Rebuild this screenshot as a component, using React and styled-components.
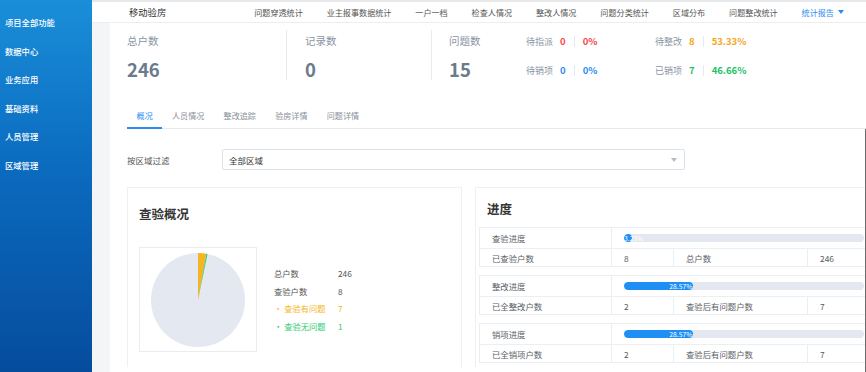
import React from "react";
import styled, { createGlobalStyle } from "styled-components";

const Global = createGlobalStyle`
  html, body { margin: 0; padding: 0; }
  body {
    font-family: "Noto Sans CJK SC", "Noto Sans", sans-serif;
    width: 866px; height: 372px; overflow: hidden; background: #fff;
  }
  * { box-sizing: border-box; }
`;

const Shell = styled.div`
  display: flex;
  width: 866px;
  height: 372px;
  overflow: hidden;
`;

const Sidebar = styled.nav`
  flex: 0 0 92px;
  background: linear-gradient(180deg, #1a8ed9 0%, #0b6bbf 45%, #064c9d 100%);
  padding-top: 8px;
  display: flex;
  flex-direction: column;
`;

const SideItem = styled.div`
  height: 28.6px;
  line-height: 28.6px;
  padding-left: 5px;
  color: #fff;
  font-size: 8.3px;
  font-weight: 500;
  white-space: nowrap;
`;

const Main = styled.div`
  flex: 1;
  display: flex;
  flex-direction: column;
  min-width: 0;
  background: #f4f5f7;
`;

const Header = styled.header`
  height: 23px;
  flex: 0 0 23px;
  background: #fff;
  border-top: 2px solid #e6e8eb;
  border-bottom: 1px solid #eceef1;
  display: flex;
  align-items: center;
  padding-left: 37px;
  white-space: nowrap;
`;

const Brand = styled.div`
  font-size: 9.3px;
  color: #333;
`;

const Nav = styled.div`
  display: flex;
  align-items: center;
  gap: 23.9px;
  margin-left: 88px;
`;

const NavItem = styled.div`
  font-size: 8.1px;
  color: ${(p) => (p.$active ? "#2d8cf0" : "#555")};
  display: flex;
  align-items: center;
  gap: 4px;
`;

const Caret = styled.span`
  width: 0;
  height: 0;
  border-left: 3.5px solid transparent;
  border-right: 3.5px solid transparent;
  border-top: 4px solid ${(p) => p.$color || "#2d8cf0"};
`;

const Body = styled.div`
  flex: 1;
  padding-left: 18px;
  display: flex;
  min-height: 0;
`;

const Content = styled.div`
  flex: 1;
  background: #fff;
  padding-left: 17px;
  min-width: 0;
  overflow: hidden;
`;

const StatsRow = styled.div`
  display: flex;
  margin-top: 7px;
`;

const StatBlock = styled.div`
  height: 50px;
  width: ${(p) => p.$w}px;
  padding-left: ${(p) => p.$pl || 0}px;
  border-right: ${(p) => (p.$divider ? "1px solid #e8ebef" : "none")};
  display: flex;
  flex-direction: column;
`;

const StatLabel = styled.div`
  font-size: 10.5px;
  line-height: 14px;
  margin-top: 4px;
  color: #8a95a5;
`;

const StatValue = styled.div`
  font-size: 18.5px;
  line-height: 24px;
  margin-top: 9px;
  font-weight: 700;
  color: #6b7a8d;
`;

const IssueGroup = styled.div`
  display: flex;
  padding-left: 17px;
`;

const IssueMain = styled.div`
  width: 77px;
  display: flex;
  flex-direction: column;
`;

const SubGrid = styled.div`
  display: grid;
  grid-template-columns: 129px 129px;
  grid-template-rows: 14px 14px;
  row-gap: 15px;
  margin-top: 4px;
`;

const SubStat = styled.div`
  display: flex;
  align-items: center;
  height: 14px;
  white-space: nowrap;
`;

const SubLabel = styled.span`
  font-size: 9px;
  color: #8a95a5;
  margin-right: 7px;
`;

const SubNum = styled.span`
  font-size: 9.5px;
  font-weight: 700;
  color: ${(p) => p.$color};
`;

const SubDivider = styled.span`
  width: 1px;
  height: 11px;
  background: #e6e9ee;
  margin: 0 8px;
`;

const Tabs = styled.div`
  display: flex;
  margin-top: 27px;
  border-bottom: 1px solid #e6e9ef;
  width: 739px;
`;

const Tab = styled.div`
  font-size: 8.1px;
  line-height: 14px;
  padding: 1px 9.6px 4px;
  height: 21px;
  color: ${(p) => (p.$active ? "#2d8cf0" : "#8a8f99")};
  border-bottom: 2px solid ${(p) => (p.$active ? "#2d8cf0" : "transparent")};
  margin-bottom: -1px;
`;

const Panel = styled.div`
  width: 739px;
  padding-top: 20px;
  border-right: 1px solid #6b6b6b;
  height: 260px;
  overflow: hidden;
`;

const FilterRow = styled.div`
  display: flex;
  align-items: center;
`;

const FilterLabel = styled.div`
  width: 95px;
  font-size: 8.5px;
  color: #555;
`;

const Select = styled.div`
  width: 463px;
  height: 21px;
  border: 1px solid #dde2ea;
  border-radius: 2px;
  display: flex;
  align-items: center;
  justify-content: space-between;
  padding: 0 7px 0 6px;
  font-size: 8.5px;
  color: #333;
`;

const Cards = styled.div`
  display: flex;
  gap: 13px;
  margin-top: 17px;
`;

const Card = styled.section`
  flex: 0 0 ${(p) => p.$w}px;
  height: 180px;
  border: 1px solid #eef0f3;
  border-bottom: none;
  padding: ${(p) => p.$pad};
`;

const CardTitle = styled.h2`
  margin: 0 0 0 ${(p) => p.$ml || 0}px;
  font-size: 12.5px;
  line-height: 18px;
  font-weight: 700;
  color: #333;
`;

const OverviewBody = styled.div`
  display: flex;
  align-items: center;
  margin-top: 24px;
`;

const PieBox = styled.div`
  width: 118px;
  height: 105px;
  border: 1px solid #e9edf2;
  display: flex;
  align-items: center;
  justify-content: center;
`;

const Legend = styled.div`
  display: grid;
  grid-template-columns: 64px auto;
  grid-auto-rows: 17.7px;
  align-items: center;
  margin-left: 17px;
  font-size: 8.3px;
  color: #555;
`;

const LegendCell = styled.div`
  color: ${(p) => p.$color || "#555"};
  white-space: nowrap;
`;

const Tables = styled.div`
  margin-top: 9px;
  display: flex;
  flex-direction: column;
  gap: 8px;
`;

const PTable = styled.div`
  display: grid;
  grid-template-columns: 132px 62px 134px 1fr;
  border-top: 1px solid #ebeef3;
  border-left: 1px solid #ebeef3;
`;

const Cell = styled.div`
  grid-column: ${(p) => p.$span || "auto"};
  height: ${(p) => (p.$tall ? 21 : 18)}px;
  border-right: 1px solid #ebeef3;
  border-bottom: 1px solid #ebeef3;
  display: flex;
  align-items: center;
  padding: 0 ${(p) => (p.$bar ? 0 : 12)}px 0 12px;
  font-size: 8.4px;
  color: #5a5e66;
  white-space: nowrap;
`;

const Bar = styled.div`
  position: relative;
  width: 240px;
  height: 8px;
  border-radius: 4px;
  background: #e3e7ef;
  overflow: hidden;
`;

const Fill = styled.div`
  height: 100%;
  border-radius: 4px;
  background: #1d8ff5;
`;

const BarText = styled.span`
  position: absolute;
  top: 0;
  font-size: 6.8px;
  line-height: 8px;
  color: #fff;
  width: 24px;
  text-align: right;
`;

function Pie() {
  const cx = 50, cy = 50, r = 47;
  const pt = (deg) => {
    const a = ((deg - 90) * Math.PI) / 180;
    return [cx + r * Math.cos(a), cy + r * Math.sin(a)];
  };
  const slice = (a0, a1) => {
    const [x0, y0] = pt(a0);
    const [x1, y1] = pt(a1);
    return `M${cx},${cy} L${x0},${y0} A${r},${r} 0 0 1 ${x1},${y1} Z`;
  };
  const y = (7 / 246) * 360;
  const g = (1 / 246) * 360;
  return (
    <svg width="100" height="100" viewBox="0 0 100 100">
      <circle cx={cx} cy={cy} r={r} fill="#e4e8f0" />
      <path d={slice(0, y)} fill="#f6b623" />
      <path d={slice(y, y + g)} fill="#37d07a" />
    </svg>
  );
}

function Progress({ pct }) {
  const w = (pct / 100) * 240;
  const left = Math.max(0, w - 24);
  return (
    <Bar>
      <Fill style={{ width: `${Math.max(w, 8)}px` }} />
      <BarText style={{ left: `${left}px`, textAlign: left === 0 ? "left" : "right" }}>
        {pct.toFixed(2)}%
      </BarText>
    </Bar>
  );
}

const sideItems = ["项目全部功能", "数据中心", "业务应用", "基础资料", "人员管理", "区域管理"];
const navItems = ["问题穿透统计", "业主报事数据统计", "一户一档", "检查人情况", "整改人情况", "问题分类统计", "区域分布", "问题整改统计"];
const tabs = ["概况", "人员情况", "整改追踪", "验房详情", "问题详情"];

const progressData = [
  { name: "查验进度", pct: 3.25, a: "已查验户数", av: "8", b: "总户数", bv: "246" },
  { name: "整改进度", pct: 28.57, a: "已全整改户数", av: "2", b: "查验后有问题户数", bv: "7" },
  { name: "销项进度", pct: 28.57, a: "已全销项户数", av: "2", b: "查验后有问题户数", bv: "7" },
];

export default function App() {
  return (
    <>
      <Global />
      <Shell>
        <Sidebar>
          {sideItems.map((s) => (
            <SideItem key={s}>{s}</SideItem>
          ))}
        </Sidebar>
        <Main>
          <Header>
            <Brand>移动验房</Brand>
            <Nav>
              {navItems.map((n) => (
                <NavItem key={n}>{n}</NavItem>
              ))}
              <NavItem $active>
                统计报告 <Caret />
              </NavItem>
            </Nav>
          </Header>
          <Body>
            <Content>
              <StatsRow>
                <StatBlock $w={160} $divider>
                  <StatLabel>总户数</StatLabel>
                  <StatValue>246</StatValue>
                </StatBlock>
                <StatBlock $w={145} $pl={18} $divider>
                  <StatLabel>记录数</StatLabel>
                  <StatValue>0</StatValue>
                </StatBlock>
                <IssueGroup>
                  <IssueMain>
                    <StatLabel>问题数</StatLabel>
                    <StatValue>15</StatValue>
                  </IssueMain>
                  <SubGrid>
                    <SubStat>
                      <SubLabel>待指派</SubLabel>
                      <SubNum $color="#f5474a">0</SubNum>
                      <SubDivider />
                      <SubNum $color="#f5474a">0%</SubNum>
                    </SubStat>
                    <SubStat>
                      <SubLabel>待整改</SubLabel>
                      <SubNum $color="#f5a623">8</SubNum>
                      <SubDivider />
                      <SubNum $color="#f5a623">53.33%</SubNum>
                    </SubStat>
                    <SubStat>
                      <SubLabel>待销项</SubLabel>
                      <SubNum $color="#2d8cf0">0</SubNum>
                      <SubDivider />
                      <SubNum $color="#2d8cf0">0%</SubNum>
                    </SubStat>
                    <SubStat>
                      <SubLabel>已销项</SubLabel>
                      <SubNum $color="#1cc267">7</SubNum>
                      <SubDivider />
                      <SubNum $color="#1cc267">46.66%</SubNum>
                    </SubStat>
                  </SubGrid>
                </IssueGroup>
              </StatsRow>

              <Tabs>
                {tabs.map((t, i) => (
                  <Tab key={t} $active={i === 0}>
                    {t}
                  </Tab>
                ))}
              </Tabs>

              <Panel>
                <FilterRow>
                  <FilterLabel>按区域过滤</FilterLabel>
                  <Select>
                    <span>全部区域</span>
                    <Caret $color="#b5bdcb" />
                  </Select>
                </FilterRow>

                <Cards>
                  <Card $w={335} $pad="17px 11px 0">
                    <CardTitle>查验概况</CardTitle>
                    <OverviewBody>
                      <PieBox>
                        <Pie />
                      </PieBox>
                      <Legend>
                        <LegendCell>总户数</LegendCell>
                        <LegendCell>246</LegendCell>
                        <LegendCell>查验户数</LegendCell>
                        <LegendCell>8</LegendCell>
                        <LegendCell $color="#f6b623">· 查验有问题</LegendCell>
                        <LegendCell $color="#f6b623">7</LegendCell>
                        <LegendCell $color="#2fcb72">· 查验无问题</LegendCell>
                        <LegendCell $color="#2fcb72">1</LegendCell>
                      </Legend>
                    </OverviewBody>
                  </Card>
                  <Card $w={420} $pad="12px 0 0 3px">
                    <CardTitle $ml={8}>进度</CardTitle>
                    <Tables>
                      {progressData.map((d) => (
                        <PTable key={d.name}>
                          <Cell $tall>{d.name}</Cell>
                          <Cell $tall $bar $span="span 3">
                            <Progress pct={d.pct} />
                          </Cell>
                          <Cell>{d.a}</Cell>
                          <Cell>{d.av}</Cell>
                          <Cell>{d.b}</Cell>
                          <Cell>{d.bv}</Cell>
                        </PTable>
                      ))}
                    </Tables>
                  </Card>
                </Cards>
              </Panel>
            </Content>
          </Body>
        </Main>
      </Shell>
    </>
  );
}
